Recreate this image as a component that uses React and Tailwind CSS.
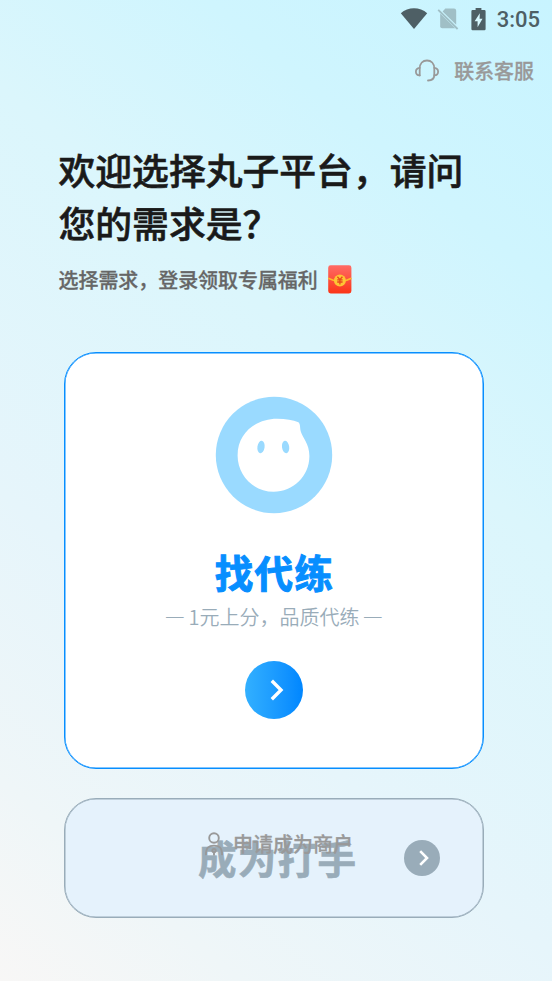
function StatusBar() {
  return (
    <div className="flex h-[38px] items-center justify-end pr-3">
      <svg width="28" height="22" viewBox="0 0 28 22" className="mr-[9px] text-[#4e5f65]">
        <path d="M0.8 5.3 C8 -1.3 20 -1.3 27.2 5.3 L14 21 Z" fill="currentColor" />
      </svg>
      <svg width="22" height="24" viewBox="0 0 22 24" className="mr-[12px] text-[#a0bfc6]">
        <path d="M8.3 1.6 H17 Q19.2 1.6 19.2 3.8 V17.8 L5.6 4.4 Z" fill="currentColor" />
        <path d="M3.2 6.4 L18.2 21.2 H5.2 Q3.2 21.2 3.2 19.2 Z" fill="currentColor" />
        <path d="M1.2 2.8 L20.6 22" stroke="currentColor" strokeWidth="1.8" />
      </svg>
      <svg width="15" height="23" viewBox="0 0 15 23" className="mr-[11px] text-[#4e5f65]">
        <path d="M4.6 0 H10.4 V2.1 H13.4 Q14.6 2.1 14.6 3.3 V21 Q14.6 22.3 13.4 22.3 H1.6 Q0.4 22.3 0.4 21 V3.3 Q0.4 2.1 1.6 2.1 H4.6 Z" fill="currentColor" />
        <path d="M8.8 5.2 L3.6 13.2 H6.6 V19.2 L11.5 10.8 H8.6 Z" fill="#d5f7fe" />
      </svg>
      <span className="mt-px font-[Roboto] text-[22px] font-medium leading-none text-[#4e5f65]">3:05</span>
    </div>
  )
}

function HeadsetIcon() {
  return (
    <svg width="24" height="24" viewBox="0 0 24 24" fill="none" stroke="#999" strokeWidth="1.8" strokeLinecap="round">
      <path d="M4.7 16.4 V9.6 C4.7 4.6 7.8 1.5 12 1.5 C16.2 1.5 19.3 4.6 19.3 9.6 V16.4" />
      <path d="M4.7 8.9 C2.2 9.2 0.9 10.6 0.9 12.7 C0.9 14.9 2.2 16.2 4.7 16.4" />
      <path d="M19.3 8.9 C21.8 9.2 23.1 10.6 23.1 12.7 C23.1 14.9 21.8 16.2 19.3 16.4 C19.2 19.4 17.3 21.4 13 21.5" />
    </svg>
  )
}

function RedPacket() {
  return (
    <svg width="24" height="29" viewBox="0 0 24 29">
      <defs>
        <linearGradient id="packet" x1="0" y1="0" x2="0" y2="1">
          <stop offset="0" stopColor="#ff6c66" />
          <stop offset="1" stopColor="#fb3517" />
        </linearGradient>
      </defs>
      <rect x="0.2" y="0.3" width="23.2" height="28.2" rx="2.4" fill="url(#packet)" />
      <path d="M0.2 13.2 Q12 19.6 23.4 13.2" fill="none" stroke="#fdb92b" strokeWidth="1.7" />
      <circle cx="11.9" cy="15.4" r="6" fill="#fdc535" />
      <path d="M9.4 11.8 L11.9 14.6 L14.4 11.8 M9.2 14.8 H14.6 M9.2 17 H14.6 M11.9 14.6 V19.4" fill="none" stroke="#e8481c" strokeWidth="1.3" />
    </svg>
  )
}

function Mascot() {
  return (
    <svg width="118" height="118" viewBox="0 0 118 118">
      <circle cx="59" cy="59" r="58.2" fill="#9adaff" />
      <path
        d="M22.6 59.5 C22.6 36 42 22.8 62 22.8 C71 22.8 78 24 83.4 26.3 C85.6 28 84.8 32 85.8 35.4 C87.5 41.5 94.4 47.5 94.4 60 C94.4 80.5 78 95.7 58.6 95.7 C38.5 95.7 22.6 79.5 22.6 59.5 Z"
        fill="#fff"
      />
      <ellipse cx="46" cy="51" rx="3.6" ry="6.3" transform="rotate(8 46 51)" fill="#9adaff" />
      <ellipse cx="70.6" cy="51" rx="3.6" ry="6.3" transform="rotate(-8 70.6 51)" fill="#9adaff" />
    </svg>
  )
}

function MerchantIcon() {
  return (
    <svg width="18" height="24" viewBox="0 0 18 24" fill="none" stroke="#999" strokeWidth="1.9">
      <circle cx="9" cy="6" r="4.8" />
      <path d="M1 23.2 C0.4 16 3.8 13.6 9 13.6 C14.2 13.6 17.6 16 17 23.2" />
      <circle cx="9" cy="18.6" r="1.7" />
      <path d="M9 20.3 V23.4" />
    </svg>
  )
}

export default function App() {
  return (
    <div className="h-[981px] w-[552px] overflow-hidden bg-[linear-gradient(220deg,#c8f4ff_0%,#cff5fe_20%,#dbf6fc_38%,#e6f5fb_66%,#eff6f8_86%,#f8f7f6_100%)] font-['Noto_Sans_CJK_SC',sans-serif]">
      <StatusBar />

      <div className="flex h-[66px] items-center justify-end pr-[18px]">
        <HeadsetIcon />
        <span className="ml-[15px] text-[19.95px] font-medium leading-none text-[#999] [-webkit-text-stroke:0.3px_#999]">联系客服</span>
      </div>

      <div className="mt-[39px] pl-[58.5px]">
        <h1 className="text-[36.8px] font-medium leading-[53px] text-[#1a1a1a] [-webkit-text-stroke:0.6px_#1a1a1a]">
          欢迎选择丸子平台，请问
          <br />
          您的需求是？
        </h1>
        <div className="mt-4 flex h-[30px] items-center">
          <p className="text-[19.95px] font-medium leading-[30px] text-[#666] [-webkit-text-stroke:0.3px_#666]">选择需求，登录领取专属福利</p>
          <span className="-mt-0.5 ml-[10px]">
            <RedPacket />
          </span>
        </div>
      </div>

      <div className="ml-16 mt-[57px] flex h-[417px] w-[420px] flex-col items-center rounded-[32px] border border-[#078eff] bg-white pt-[43px] shadow-[inset_0_0_0_0.5px_#078eff]">
        <Mascot />
        <h2 className="mt-[27px] pl-px text-[38.5px] font-bold leading-[60px] tracking-[1.3px] text-[#078eff] [-webkit-text-stroke:1px_#078eff]">找代练</h2>
        <p className="mt-px flex gap-[5px] text-[20px] font-[350] leading-[30px] text-[#99acb9]">
          <span className="-mt-0.5 scale-x-110">—</span>
          <span>1元上分，品质代练</span>
          <span className="-mt-0.5 scale-x-110">—</span>
        </p>
        <button className="mt-[29px] flex h-[58px] w-[58px] items-center justify-center rounded-full bg-linear-to-r from-[#32b0ff] to-[#0086ff]">
          <svg width="14" height="22" viewBox="0 0 14 22" className="ml-[5px]" fill="none" stroke="#fff" strokeWidth="3.4">
            <path d="M1.8 1.8 L11 11 L1.8 20.2" />
          </svg>
        </button>
      </div>

      <div className="relative ml-16 mt-[29px] flex h-[120px] w-[420px] items-center rounded-[32px] border border-[#99acb9] bg-[#e5f2fc] shadow-[inset_0_0_0_0.5px_#99acb9]">
        <h2 className="-mt-0.5 ml-[133px] w-40 whitespace-nowrap text-[38.5px] font-bold leading-[60px] tracking-[1.3px] text-[#99acb9] [-webkit-text-stroke:0.6px_#99acb9]">成为打手</h2>
        <span className="ml-[46px] flex h-9 w-9 items-center justify-center rounded-full bg-[#99acb9]">
          <svg width="10" height="16" viewBox="0 0 10 16" className="ml-[4px]" fill="none" stroke="#fff" strokeWidth="2.6">
            <path d="M1.2 1.2 L8 8 L1.2 14.8" />
          </svg>
        </span>
        {/* the merchant link sits over the card title */}
        <a className="absolute left-[140px] top-[30px] flex h-[30px] items-center">
          <MerchantIcon />
          <span className="ml-[10px] text-[20px] font-medium leading-[30px] text-[#999] [-webkit-text-stroke:0.3px_#999]">申请成为商户</span>
        </a>
      </div>
    </div>
  )
}
